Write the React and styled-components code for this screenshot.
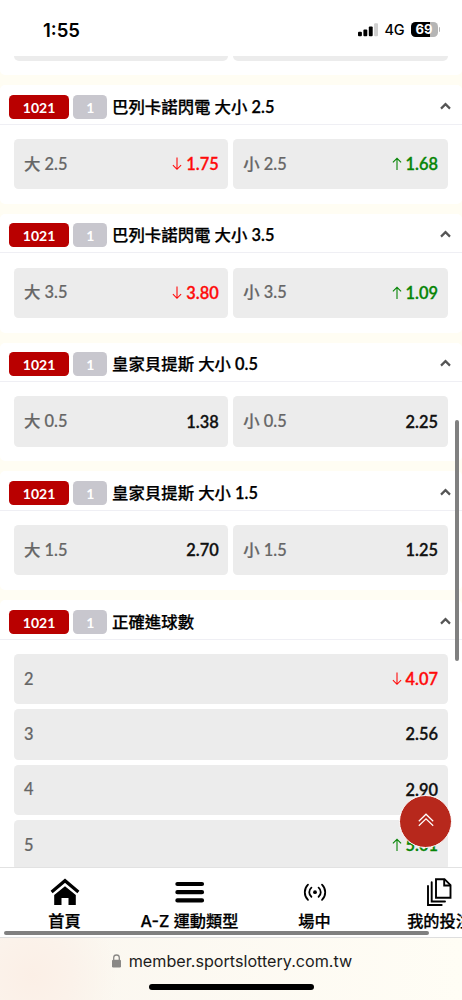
import styled, { createGlobalStyle } from "styled-components";

const markets = [
    { title: "巴列卡諾閃電 大小", line: "2.5", odds: [["大", "2.5", "1.75", "down"], ["小", "2.5", "1.68", "up"]] },
    { title: "巴列卡諾閃電 大小", line: "3.5", odds: [["大", "3.5", "3.80", "down"], ["小", "3.5", "1.09", "up"]] },
    { title: "皇家貝提斯 大小", line: "0.5", odds: [["大", "0.5", "1.38"], ["小", "0.5", "2.25"]] },
    { title: "皇家貝提斯 大小", line: "1.5", odds: [["大", "1.5", "2.70"], ["小", "1.5", "1.25"]] },
    { title: "正確進球數", single: true, odds: [["", "2", "4.07", "down"], ["", "3", "2.56"], ["", "4", "2.90"], ["", "5", "5.01", "up"]] },
]

const HomeIcon = () => (
    <svg width="30" height="28" viewBox="0 0 30 28">
        <path d="M1.6 13.9 15 2.7l13.4 11.2" fill="none" stroke="#000" strokeWidth="3.2" />
        <path d="M15 8.2 4.2 17v10h7.3v-7h7v7h7.3V17z" fill="#000" />
    </svg>
)

const MenuIcon = () => (
    <svg width="30" height="28" viewBox="0 0 30 28">
        <path d="M2.4 6h24.6M2.4 14.2h24.6M2.4 22.4h24.6" stroke="#000" strokeWidth="4.2" strokeLinecap="round" />
    </svg>
)

const LiveIcon = () => (
    <svg width="30" height="28" viewBox="0 0 30 28" fill="none" stroke="#000" strokeWidth="1.8" strokeLinecap="round">
        <circle cx="15" cy="14.2" r="1.9" fill="#000" stroke="none" />
        <path d="M11.4 9.6a6 6 0 0 0 0 9.2M18.6 9.6a6 6 0 0 1 0 9.2" />
        <path d="M8 6.6a10.6 10.6 0 0 0 0 15.2M22 6.6a10.6 10.6 0 0 1 0 15.2" />
    </svg>
)

const BetsIcon = () => (
    <svg width="30" height="28" viewBox="0 0 30 28" fill="none" stroke="#000" strokeWidth="1.9">
        <path d="M11 1.2h8.5l6 6v12.6H11z" />
        <path d="M19.2 1.2v6.3h6.3" />
        <path d="M6.7 4.3v19.2h13.3M3 8v19h13.7" strokeLinecap="round" />
    </svg>
)

const tabs = [
    { label: "首頁", icon: <HomeIcon /> },
    { label: "A-Z 運動類型", icon: <MenuIcon /> },
    { label: "場中", icon: <LiveIcon /> },
    { label: "我的投注", icon: <BetsIcon /> },
]

function Odd({ side, line, value, trend }){
    return(
        <StyledOdd>
            <StyledLabel>{side && `${side} `}{line}</StyledLabel>
            <StyledValue $trend={trend}>
                {trend && (
                    <svg width="10" height="14" viewBox="0 0 10 14" fill="none" stroke="currentColor" strokeWidth="1.1">
                        <path d={trend === "up" ? "M5 13V1.4M.9 5.4 5 1.3l4.1 4.1" : "M5 .6v11.6M.9 8.2 5 12.3l4.1-4.1"} />
                    </svg>
                )}
                {value}
            </StyledValue>
        </StyledOdd>
    )
}

function Market({ title, line, single, odds }){
    return(
        <StyledCard>
            <StyledCardHeader>
                <StyledBadge $width="59.5px" $color="#b90000">1021</StyledBadge>
                <StyledBadge $width="34px" $color="#c8c7ce">1</StyledBadge>
                <StyledTitle>{title}{line && <> <StyledNumber>{line}</StyledNumber></>}</StyledTitle>
                <StyledChevron width="11" height="8" viewBox="0 0 11 8">
                    <path d="M1 6.6 5.5 2.1 10 6.6" />
                </StyledChevron>
            </StyledCardHeader>
            <StyledOdds $single={single}>
                {odds.map(([side, oddLine, value, trend]) => (
                    <Odd key={side + oddLine} side={side} line={oddLine} value={value} trend={trend} />
                ))}
            </StyledOdds>
        </StyledCard>
    )
}

function StatusBar(){
    return(
        <StyledStatus>
            <StyledClock>1:55</StyledClock>
            <StyledSignals>
                <svg width="20" height="14" viewBox="0 0 20 14">
                    <rect x="0" y="8.8" width="3.9" height="4.5" rx="1" />
                    <rect x="5.4" y="6.5" width="3.9" height="6.8" rx="1" />
                    <rect x="10.8" y="3.5" width="3.9" height="9.8" rx="1" />
                    <rect x="16.1" y="0.3" width="3.9" height="13" rx="1" fill="#cfcfcf" />
                </svg>
                <span>4G</span>
                <StyledBattery>69</StyledBattery>
                <StyledBatteryTip />
            </StyledSignals>
        </StyledStatus>
    )
}

export default function App(){
    return(
        <StyledPhone>
            <GlobalStyle />
            <StatusBar />
            <StyledContent>
                <StyledPreviousCard>
                    <StyledCutOdd />
                    <StyledCutOdd />
                </StyledPreviousCard>
                {markets.map((market, index) => <Market key={index} {...market} />)}
            </StyledContent>
            <StyledTabs>
                {tabs.map((tab) => (
                    <StyledTab key={tab.label}>
                        {tab.icon}
                        <span>{tab.label}</span>
                    </StyledTab>
                ))}
                <StyledTabsScroll />
            </StyledTabs>
            <StyledBrowserBar>
                <StyledAddress>
                    <svg width="9" height="14" viewBox="0 0 9 14">
                        <path d="M1.7 6V3.8a2.8 2.8 0 0 1 5.6 0V6" fill="none" stroke="#8a8886" strokeWidth="1.3" />
                        <rect x="0" y="5.8" width="9" height="7.6" rx="1.2" fill="#8a8886" />
                    </svg>
                    member.sportslottery.com.tw
                </StyledAddress>
                <StyledHomeBar />
            </StyledBrowserBar>
            <StyledPageScroll />
            <StyledTopButton>
                <svg width="16" height="14" viewBox="0 0 16 14" fill="none" stroke="#fff" strokeWidth="1.2">
                    <path d="M.8 8.2 8 1.2l7.2 7M.8 12.8 8 5.8l7.2 7" />
                </svg>
            </StyledTopButton>
        </StyledPhone>
    )
}

const GlobalStyle = createGlobalStyle`
    * {
        box-sizing: border-box;
    }
    body {
        margin: 0;
        background: #fff;
    }
    svg {
        display: block;
        flex-shrink: 0;
    }
`

const StyledPhone = styled.div`
    position: relative;
    width: 462px;
    height: 1000px;
    display: flex;
    flex-direction: column;
    overflow: hidden;
    background: #fff;
    font-family: Lato, "Noto Sans CJK TC", sans-serif;
`

const StyledStatus = styled.header`
    height: 56px;
    flex-shrink: 0;
    padding: 3px 22px 0 43px;
    display: flex;
    align-items: center;
    justify-content: space-between;
    font-family: Inter, sans-serif;
`

const StyledClock = styled.span`
    font-size: 18.5px;
    font-weight: 600;
`

const StyledSignals = styled.div`
    display: flex;
    align-items: center;
    font-size: 14.5px;
    font-weight: 500;

    span {
        margin: 0 6px 0 6.5px;
        letter-spacing: -0.2px;
    }
`

const StyledBattery = styled.div`
    width: 27px;
    height: 15px;
    border-radius: 4.5px;
    background: linear-gradient(90deg, #000 70%, #b5b5b5 70%);
    color: #fff;
    font-size: 13px;
    font-weight: 700;
    line-height: 15px;
    text-align: center;
`

const StyledBatteryTip = styled.i`
    width: 1.5px;
    height: 5px;
    margin-left: 1px;
    border-radius: 0 2px 2px 0;
    background: #b5b5b5;
`

const StyledContent = styled.main`
    flex: 1;
    min-height: 0;
    overflow: hidden;
    display: flex;
    flex-direction: column;
    gap: 10px;
    background: #fffdf3;
`

const StyledPreviousCard = styled.div`
    height: 19px;
    flex-shrink: 0;
    padding: 0 14.4px 0 14px;
    display: grid;
    grid-template-columns: 1fr 1fr;
    gap: 5px;
    border-radius: 0 0 5px 5px;
    background: #fff;
`

const StyledCutOdd = styled.div`
    height: 4.5px;
    border-radius: 0 0 5px 5px;
    background: #ececec;
`

const StyledCard = styled.section`
    flex-shrink: 0;
    border-radius: 5px;
    background: #fff;
`

const StyledCardHeader = styled.div`
    height: 39.5px;
    padding: 4.5px 11px 0 9.3px;
    display: flex;
    align-items: center;
    border-bottom: 1px solid #efeff4;
`

const StyledBadge = styled.span`
    width: ${(props) => props.$width};
    height: 24px;
    margin-right: 4.5px;
    border-radius: 4.5px;
    background: ${(props) => props.$color};
    color: #fff;
    font-size: 14px;
    font-weight: 700;
    line-height: 25px;
    text-align: center;
`

const StyledTitle = styled.h2`
    flex: 1;
    margin: 0;
    padding-left: 0.3px;
    font-size: 16.4px;
    font-weight: 500;
    line-height: 24px;
    color: #000;
    -webkit-text-stroke: 0.25px currentColor;
`

const StyledNumber = styled.span`
    font-weight: 600;
`

const StyledChevron = styled.svg`
    margin-bottom: 2px;
    fill: none;
    stroke: #555;
    stroke-width: 2.2;
`

const StyledOdds = styled.div`
    padding: 14.3px 14.4px 14.7px 14px;
    display: grid;
    grid-template-columns: ${(props) => (props.$single ? "1fr" : "1fr 1fr")};
    gap: 5px;
`

const StyledOdd = styled.div`
    height: 50.3px;
    padding: 0 9.6px 0 10px;
    display: flex;
    align-items: center;
    justify-content: space-between;
    border-radius: 4.5px;
    background: #ececec;
    color: #666;
    font-size: 16.4px;
    line-height: 24px;
`

const StyledLabel = styled.span`
    padding-bottom: 0.5px;
    font-weight: 500;
    -webkit-text-stroke: 0.2px currentColor;
`

const trendColors = { up: "#078507", down: "#ff0b0b" }

const StyledValue = styled.strong`
    display: flex;
    align-items: center;
    gap: 4px;
    color: ${(props) => trendColors[props.$trend] || "#111"};
    font-weight: 600;
    -webkit-text-stroke: 0.3px currentColor;
`

const StyledTabs = styled.nav`
    position: relative;
    height: 71px;
    flex-shrink: 0;
    padding: 10px 0 0 2px;
    display: flex;
    overflow: hidden;
    border-top: 1px solid #e2e2e2;
    border-bottom: 1px solid #dedede;
    background: #fff;
`

const StyledTab = styled.div`
    width: 125px;
    flex-shrink: 0;
    display: flex;
    flex-direction: column;
    align-items: center;
    font-size: 16.2px;
    font-weight: 500;
    line-height: 30px;
    font-family: Inter, "Noto Sans CJK TC", sans-serif;
    -webkit-text-stroke: 0.25px currentColor;
`

const StyledTabsScroll = styled.div`
    position: absolute;
    left: 4px;
    bottom: 2px;
    width: 425px;
    height: 4px;
    border-radius: 2px;
    background: #808080;
`

const StyledBrowserBar = styled.footer`
    height: 62px;
    flex-shrink: 0;
    display: flex;
    flex-direction: column;
    align-items: center;
    background: radial-gradient(circle at 32px 38px, #fbefe6 0, #fbf2ea 40px, rgba(251, 247, 240, 0) 85px), linear-gradient(90deg, #faf6ef, #fffdf5);
`

const StyledAddress = styled.div`
    height: 46px;
    padding-left: 2px;
    display: flex;
    align-items: center;
    gap: 8px;
    color: #1c1c1c;
    font-family: Inter, sans-serif;
    font-size: 16.15px;
`

const StyledHomeBar = styled.div`
    width: 165px;
    height: 6px;
    border-radius: 3px;
    background: #000;
`

const StyledPageScroll = styled.div`
    position: absolute;
    top: 420px;
    right: 3px;
    width: 4px;
    height: 241px;
    border-radius: 2px;
    background: #808080;
`

const StyledTopButton = styled.button`
    position: absolute;
    top: 795px;
    right: 10px;
    width: 53px;
    height: 53px;
    padding: 0 0 3px 1px;
    display: flex;
    align-items: center;
    justify-content: center;
    border: 1.5px solid #fff;
    border-radius: 50%;
    background: #b7281c;
`
